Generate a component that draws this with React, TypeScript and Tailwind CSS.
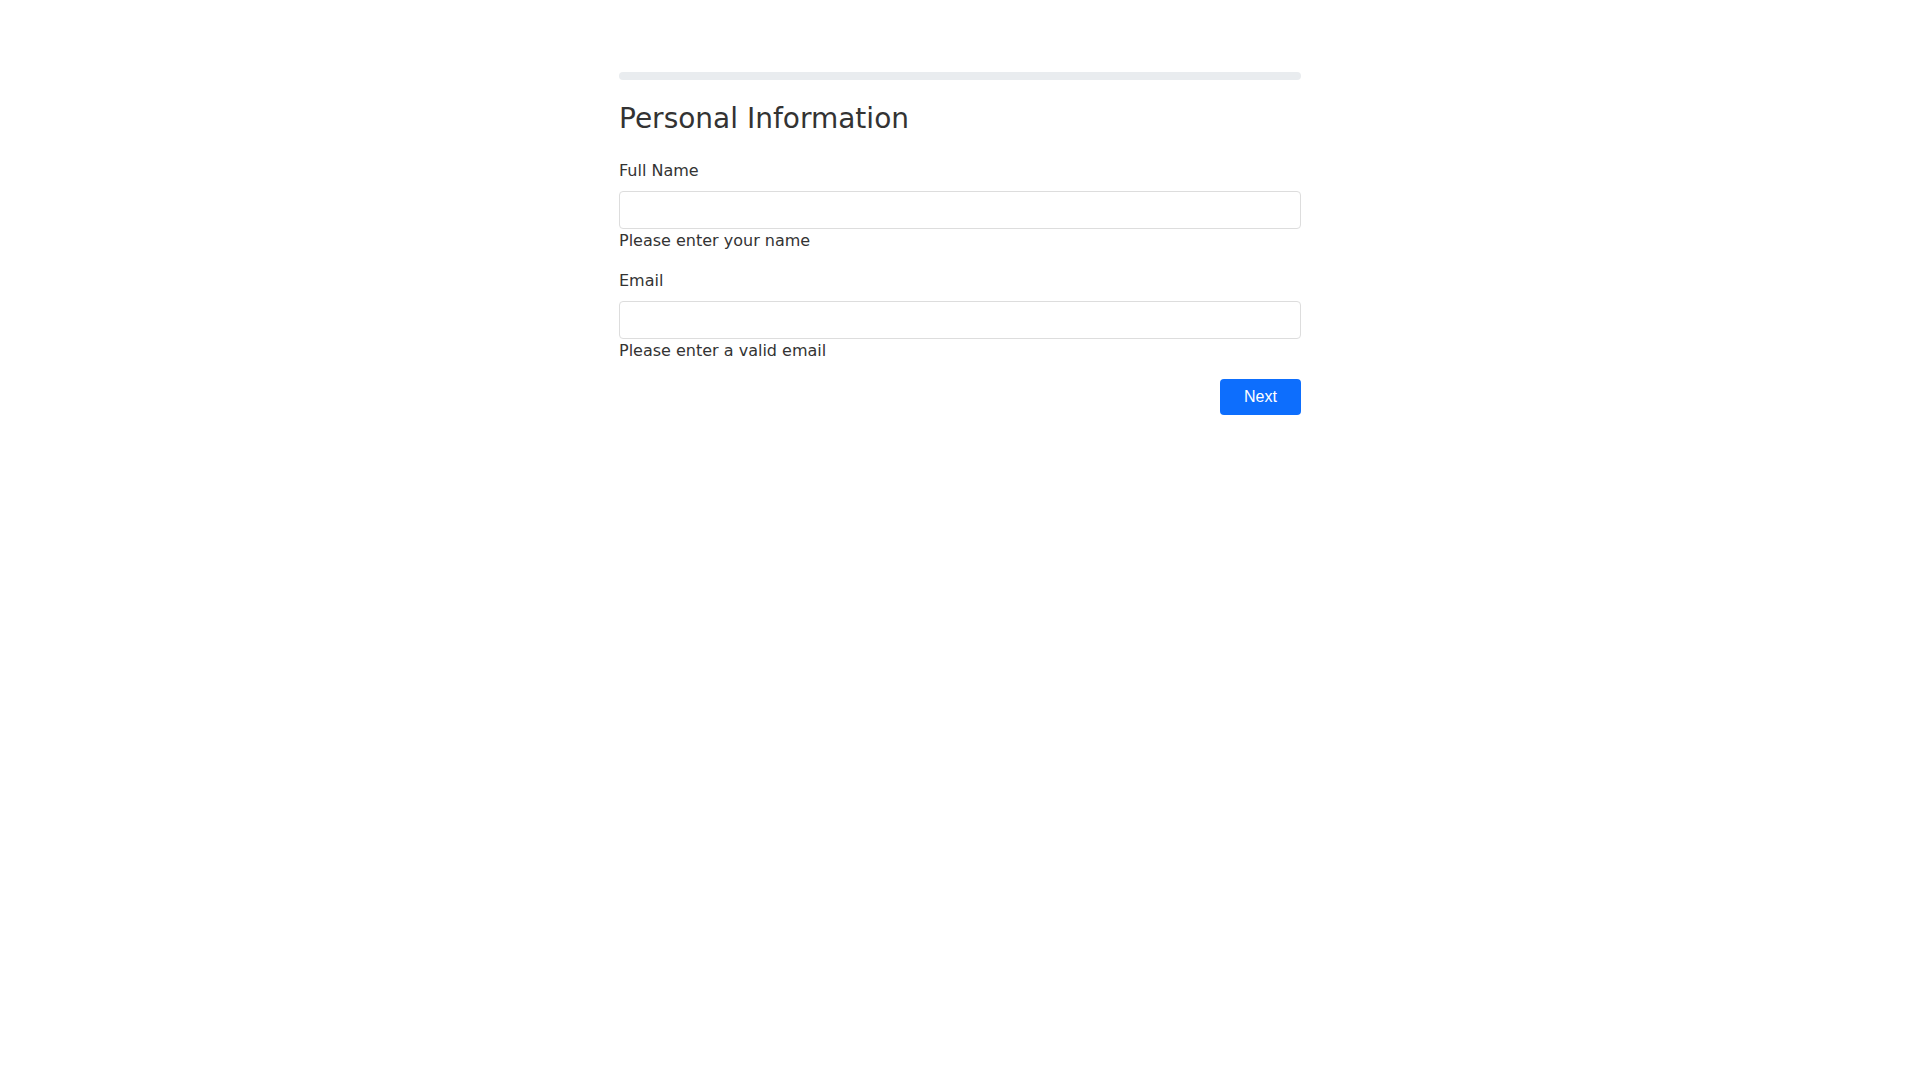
import React from "react";

export default function App() {
  return (
    <div className="min-h-screen bg-white font-['DejaVu_Sans',sans-serif] text-[#333333]">
      <div className="mx-auto w-[682px] pt-[72px]">
        <div className="h-2 w-full rounded-full bg-[#e9ecef]" />
        <h3 className="mt-[22px] mb-[23px] text-[28px] leading-[1.2] font-normal">
          Personal Information
        </h3>
        <div className="mb-4">
          <label htmlFor="name" className="mb-2 block text-base leading-6">
            Full Name
          </label>
          <input
            id="name"
            type="text"
            className="block h-[38px] w-full rounded-[4px] border border-[#dddddd] bg-white px-3 text-base outline-none"
          />
          <div className="text-base leading-6">Please enter your name</div>
        </div>
        <div className="mb-4">
          <label htmlFor="email" className="mb-2 block text-base leading-6">
            Email
          </label>
          <input
            id="email"
            type="email"
            className="block h-[38px] w-full rounded-[4px] border border-[#dddddd] bg-white px-3 text-base outline-none"
          />
          <div className="text-base leading-6">Please enter a valid email</div>
        </div>
        <div className="flex justify-end">
          <button
            type="button"
            className="h-9 w-[81px] rounded-[4px] bg-[#0d6efd] font-['Liberation_Sans',Arial,sans-serif] text-base text-white"
          >
            Next
          </button>
        </div>
      </div>
    </div>
  );
}
